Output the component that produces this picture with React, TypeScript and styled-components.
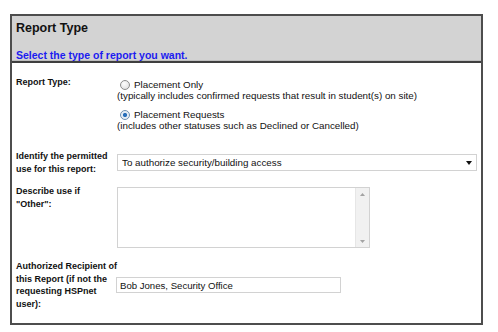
import styled, { createGlobalStyle } from 'styled-components';

const GlobalStyle = createGlobalStyle`
  html, body {
    margin: 0;
    padding: 0;
    background: #fff;
  }
  body {
    font-family: "Liberation Sans", Arial, sans-serif;
    color: #111;
  }
`;

const Page = styled.div`
  padding: 14px 0 0 10px;
`;

const Panel = styled.section`
  width: 469px;
  border: 2px solid #4d4d4d;
  background: #fff;
`;

const Header = styled.header`
  background: #d3d3d3;
  padding: 5px 4px 0;
  border-bottom: 2px solid #3f3f3f;
  box-shadow: inset 0 -1px 0 #bdbdbd;
`;

const Title = styled.h1`
  margin: 0;
  font-size: 12.5px;
  line-height: 15px;
  font-weight: 700;
  color: #111;
`;

const Subtitle = styled.p`
  margin: 13px 0 0;
  font-size: 10.5px;
  line-height: 12px;
  font-weight: 700;
  color: #1c1cf0;
`;

const Body = styled.div`
  display: flex;
  flex-direction: column;
  padding: 13px 2px 13px 4px;
`;

const Row = styled.div<{ $align?: string; $gap?: number }>`
  display: flex;
  align-items: ${({ $align }) => $align ?? 'flex-start'};
  margin-top: ${({ $gap }) => $gap ?? 0}px;
`;

const Label = styled.div`
  flex: 0 0 101px;
  font-size: 9px;
  line-height: 12.5px;
  font-weight: 700;
`;

const Field = styled.div`
  flex: 1;
  display: flex;
  flex-direction: column;
  font-size: 9.8px;
  line-height: 11px;
`;

const Option = styled.label<{ $first?: boolean }>`
  display: flex;
  align-items: center;
  gap: 4px;
  padding-left: 3px;
  margin-top: ${({ $first }) => ($first ? 3 : 8)}px;
  font-size: 9.8px;
  line-height: 11px;
`;

const Radio = styled.input`
  appearance: none;
  margin: 0;
  width: 10px;
  height: 10px;
  border-radius: 50%;
  border: 1px solid #8c8c8c;
  background: radial-gradient(circle at 40% 35%, #fdfdfd 0%, #e4e4e4 70%, #d0d0d0 100%);
  box-sizing: border-box;

  &:checked {
    border-color: #6d8fb0;
    background: radial-gradient(circle, #1f6fc5 0%, #2c6fb5 32%, #dfe9f3 42%, #f4f7fa 100%);
  }
`;

const Note = styled.div`
  font-size: 9.8px;
  line-height: 11px;
  color: #111;
`;

const SelectWrap = styled.div`
  position: relative;
  width: 360px;
`;

const Select = styled.select`
  appearance: none;
  width: 100%;
  height: 17px;
  box-sizing: border-box;
  margin: 0;
  padding: 0 16px 0 4px;
  border: 1px solid #d2d2d2;
  border-radius: 0;
  background: #fff;
  font-family: "Liberation Sans", Arial, sans-serif;
  font-size: 9.8px;
  color: #111;
`;

const Caret = styled.svg`
  position: absolute;
  right: 5px;
  top: 7px;
  pointer-events: none;
`;

const TextBox = styled.div`
  display: flex;
  width: 253px;
  height: 61px;
  margin-top: 2px;
  box-sizing: border-box;
  border: 1px solid #d2d2d2;
  background: #fff;
`;

const TextArea = styled.textarea`
  flex: 1;
  border: none;
  resize: none;
  outline: none;
  margin: 0;
  padding: 2px 4px;
  font-family: "Liberation Sans", Arial, sans-serif;
  font-size: 9.8px;
`;

const ScrollTrack = styled.div`
  flex: 0 0 13px;
  display: flex;
  flex-direction: column;
  justify-content: space-between;
  align-items: center;
  padding: 5px 0 4px;
  background: #f1f1f1;
  border-left: 1px solid #e6e6e6;
`;

const TextInput = styled.input`
  width: 225px;
  height: 16px;
  box-sizing: border-box;
  margin: 0 0 0 -1px;
  padding: 0 3px;
  border: 1px solid #d2d2d2;
  font-family: "Liberation Sans", Arial, sans-serif;
  font-size: 9.6px;
  color: #111;
`;

function Arrow({ up }: { up?: boolean }) {
  return (
    <svg width="5" height="3" viewBox="0 0 5 3">
      <path d={up ? 'M0 3 L2.5 0 L5 3 Z' : 'M0 0 L2.5 3 L5 0 Z'} fill="#a3a3a3" />
    </svg>
  );
}

export default function App() {
  return (
    <>
      <GlobalStyle />
      <Page>
        <Panel>
          <Header>
            <Title>Report Type</Title>
            <Subtitle>Select the type of report you want.</Subtitle>
          </Header>
          <Body>
            <Row>
              <Label>Report Type:</Label>
              <Field>
                <Option $first>
                  <Radio type="radio" name="type" />
                  Placement Only
                </Option>
                <Note>(typically includes confirmed requests that result in student(s) on site)</Note>
                <Option>
                  <Radio type="radio" name="type" defaultChecked />
                  Placement Requests
                </Option>
                <Note>(includes other statuses such as Declined or Cancelled)</Note>
              </Field>
            </Row>

            <Row $align="center" $gap={19}>
              <Label>
                Identify the permitted
                <br />
                use for this report:
              </Label>
              <Field>
                <SelectWrap>
                  <Select defaultValue="security">
                    <option value="security">To authorize security/building access</option>
                  </Select>
                  <Caret width="6" height="4" viewBox="0 0 6 4">
                    <path d="M0 0 L6 0 L3 4 Z" fill="#111" />
                  </Caret>
                </SelectWrap>
              </Field>
            </Row>

            <Row $gap={10}>
              <Label>
                Describe use if
                <br />
                "Other":
              </Label>
              <Field>
                <TextBox>
                  <TextArea />
                  <ScrollTrack>
                    <Arrow up />
                    <Arrow />
                  </ScrollTrack>
                </TextBox>
              </Field>
            </Row>

            <Row $align="center" $gap={12}>
              <Label>
                Authorized Recipient of
                <br />
                this Report (if not the
                <br />
                requesting HSPnet
                <br />
                user):
              </Label>
              <Field>
                <TextInput defaultValue="Bob Jones, Security Office" />
              </Field>
            </Row>
          </Body>
        </Panel>
      </Page>
    </>
  );
}
